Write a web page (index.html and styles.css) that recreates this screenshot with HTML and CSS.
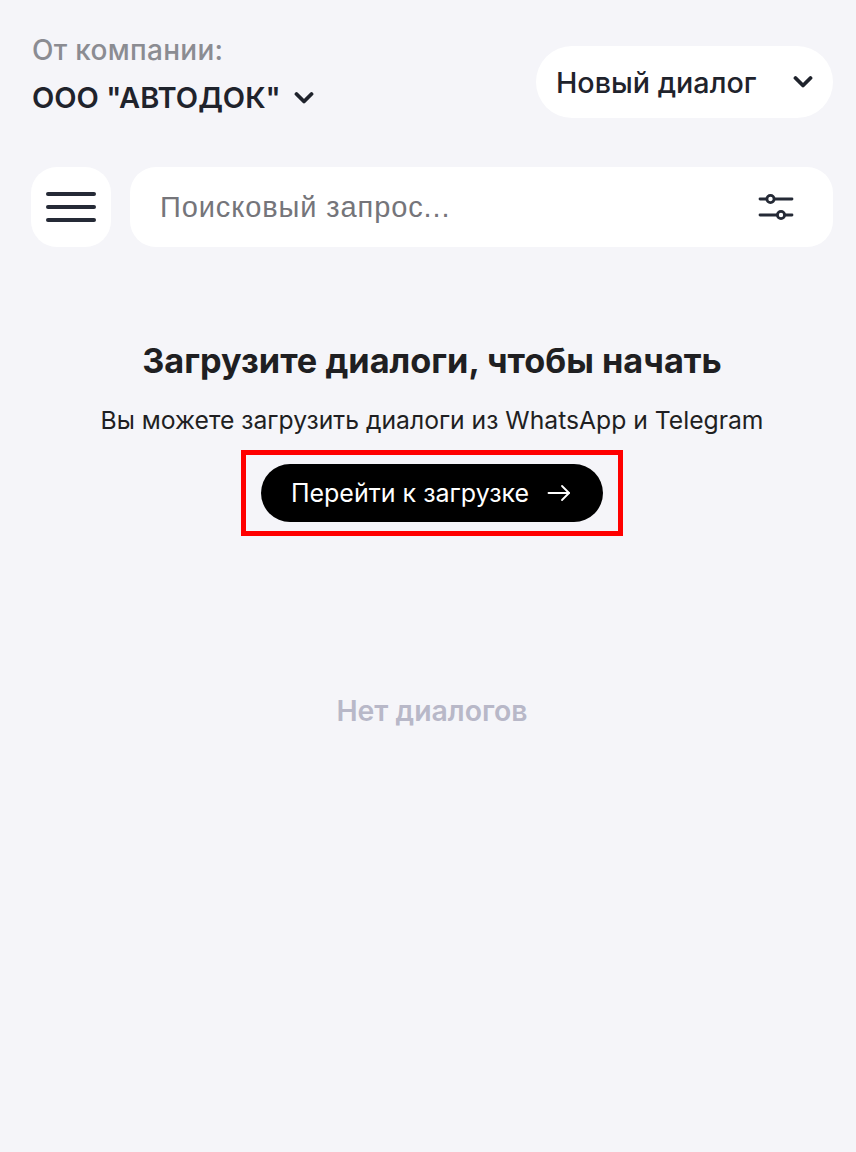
FILE: index.html
```html
<!DOCTYPE html>
<html lang="ru">
<head>
<meta charset="utf-8">
<link rel="stylesheet" href="styles.css">
</head>
<body>
<div class="page">
  <header class="top">
    <div class="company">
      <div class="company-label">От компании:</div>
      <div class="company-name">ООО "АВТОДОК"
        <svg class="chev" width="20" height="14" viewBox="0 0 20 14"><path d="M2.5 3 L10 10.5 L17.5 3" fill="none" stroke="#1f232c" stroke-width="3.8" stroke-linecap="round" stroke-linejoin="round"/></svg>
      </div>
    </div>
    <button class="dialog-select">
      <span>Новый диалог</span>
      <svg class="chev" width="20" height="14" viewBox="0 0 20 14"><path d="M2.5 3 L10 10.5 L17.5 3" fill="none" stroke="#1f232c" stroke-width="3.8" stroke-linecap="round" stroke-linejoin="round"/></svg>
    </button>
  </header>

  <div class="search-row">
    <button class="menu-btn">
      <svg width="50" height="32" viewBox="0 0 50 32"><g stroke="#252a36" stroke-width="4" stroke-linecap="round"><line x1="2" y1="3" x2="48" y2="3"/><line x1="2" y1="16" x2="48" y2="16"/><line x1="2" y1="29" x2="48" y2="29"/></g></svg>
    </button>
    <div class="search">
      <span class="placeholder">Поисковый запрос...</span>
      <svg class="filter" width="36" height="26" viewBox="0 0 36 26"><g fill="none" stroke="#252a36" stroke-width="2.8" stroke-linecap="round"><line x1="2" y1="5" x2="8.5" y2="5"/><circle cx="12.5" cy="5" r="3.6"/><line x1="16.5" y1="5" x2="34" y2="5"/><line x1="2" y1="21" x2="19" y2="21"/><circle cx="23" cy="21" r="3.6"/><line x1="27" y1="21" x2="34" y2="21"/></g></svg>
    </div>
  </div>

  <section class="empty">
    <h1 class="title">Загрузите диалоги, чтобы начать</h1>
    <p class="subtitle">Вы можете загрузить диалоги из WhatsApp и Telegram</p>
    <div class="highlight">
      <button class="upload-btn">Перейти к загрузке
        <svg class="arrow" width="24" height="18" viewBox="0 0 24 18"><g fill="none" stroke="#fff" stroke-width="1.8" stroke-linecap="round" stroke-linejoin="round"><line x1="1.5" y1="9" x2="22" y2="9"/><path d="M15 2 L22 9 L15 16"/></g></svg>
      </button>
    </div>
  </section>

  <div class="none">Нет диалогов</div>
</div>
</body>
</html>
```

FILE: styles.css
```css
* { box-sizing: border-box; }
html, body { margin: 0; padding: 0; background: #f5f5f9; }
body { font-family: Inter, "Noto Sans", sans-serif; color: #1f232c; }

.page {
  width: 856px;
  min-height: 1152px;
  padding: 32px 23px 0 31px;
}

.top {
  display: flex;
  justify-content: space-between;
  align-items: flex-start;
}
.company { padding-left: 1px; }
.company-label {
  font-size: 28px;
  line-height: 36px;
  color: #8b8c92;
  font-weight: 500;
  letter-spacing: 0.3px;
}
.company-name {
  margin-top: 13px;
  font-size: 29px;
  line-height: 34px;
  font-weight: 600;
  display: flex;
  align-items: center;
  gap: 13px;
}
.chev { display: block; }

.dialog-select {
  margin-top: 14px;
  height: 72px;
  width: 297px;
  border: none;
  background: #fff;
  border-radius: 36px;
  padding: 0 20px 0 20px;
  display: flex;
  align-items: center;
  justify-content: space-between;
  font-family: inherit;
  font-size: 28.7px;
  font-weight: 500;
  color: #1f232c;
}

.search-row {
  margin-top: 49px;
  display: flex;
  gap: 19px;
}
.menu-btn {
  width: 80px;
  height: 80px;
  border: none;
  background: #fff;
  border-radius: 26px;
  display: flex;
  align-items: center;
  justify-content: center;
  padding: 0;
}
.search {
  flex: 1;
  height: 80px;
  background: #fff;
  border-radius: 26px;
  display: flex;
  align-items: center;
  justify-content: space-between;
  padding: 0 39px 0 30px;
}
.placeholder {
  font-family: "Liberation Sans", Arial, sans-serif;
  font-size: 29px;
  letter-spacing: 0.9px;
  color: #75757a;
}
.filter { display: block; }

.empty {
  margin-top: 93px;
  display: flex;
  flex-direction: column;
  align-items: center;
}
.title {
  margin: 0;
  font-size: 34.3px;
  line-height: 42px;
  font-weight: 700;
  color: #1f1f22;
}
.subtitle {
  margin: 23px 0 0;
  font-size: 24.7px;
  line-height: 30px;
  color: #1f1f22;
}
.highlight {
  margin-top: 15px;
  border: 5px solid #ff0000;
  padding: 9px 15px;
}
.upload-btn {
  height: 58px;
  width: 342px;
  border: none;
  border-radius: 29px;
  background: #000;
  color: #fff;
  font-family: inherit;
  font-size: 25px;
  display: flex;
  align-items: center;
  justify-content: center;
  gap: 18px;
  padding: 0 2px 0 0;
}
.arrow { display: block; }

.none {
  margin-top: 157px;
  text-align: center;
  font-size: 28.4px;
  font-weight: 600;
  color: #b8b8c8;
}
```
